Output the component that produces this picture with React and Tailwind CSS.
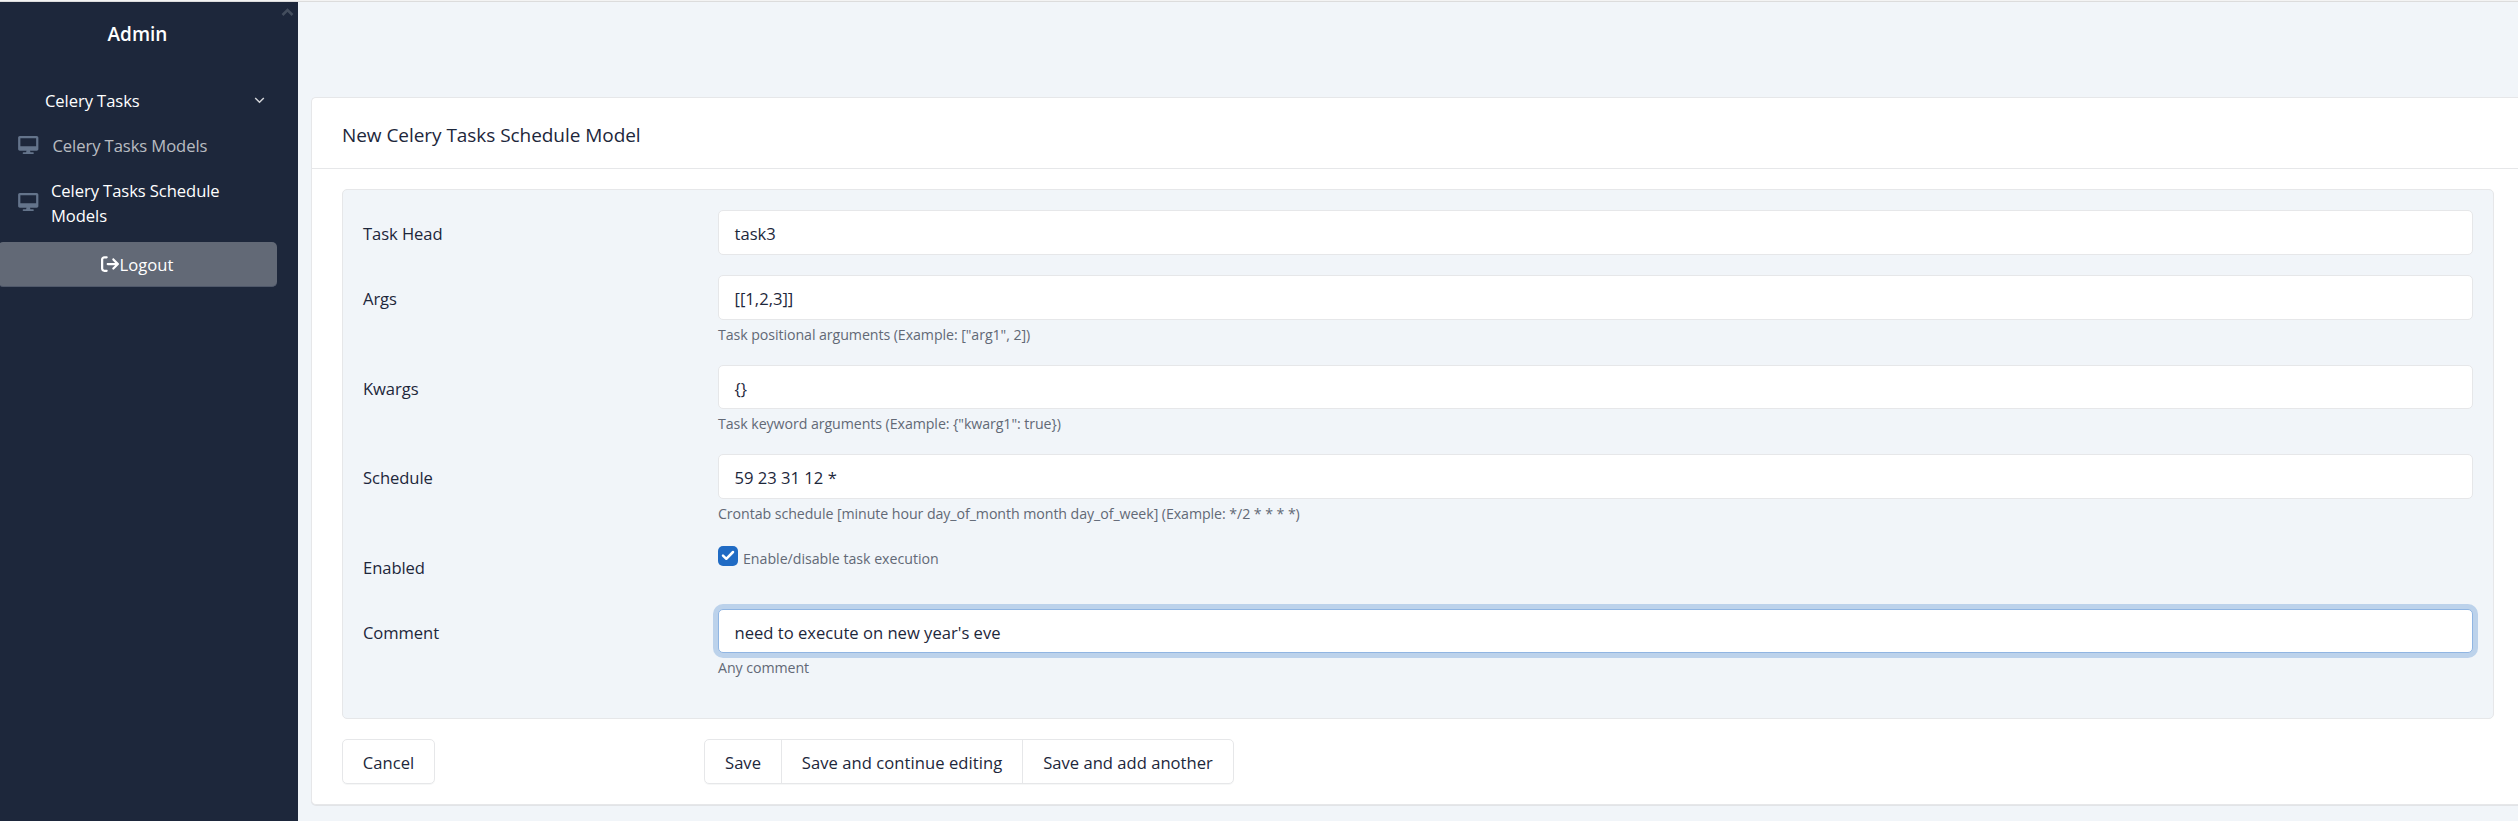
import { FaArrowRightFromBracket } from 'react-icons/fa6';

const fields = [
  { label: 'Task Head', value: 'task3' },
  { label: 'Args', value: '[[1,2,3]]', hint: 'Task positional arguments (Example: ["arg1", 2])' },
  { label: 'Kwargs', value: '{}', hint: 'Task keyword arguments (Example: {"kwarg1": true})' },
  {
    label: 'Schedule',
    value: '59 23 31 12 *',
    hint: 'Crontab schedule [minute hour day_of_month month day_of_week] (Example: */2 * * * *)',
  },
  { label: 'Enabled', checkbox: true, hint: 'Enable/disable task execution' },
  { label: 'Comment', value: "need to execute on new year's eve", hint: 'Any comment', focused: true },
];

function DesktopIcon() {
  return (
    <svg className="h-[18px] w-[20.5px] shrink-0" viewBox="0 0 576 512" fill="#64748b">
      <path d="M528 0H48C21.5 0 0 21.5 0 48v320c0 26.5 21.5 48 48 48h192l-16 48h-72c-13.2 0-24 10.8-24 24s10.8 24 24 24h272c13.3 0 24-10.7 24-24s-10.7-24-24-24h-72l-16-48h192c26.5 0 48-21.5 48-48V48c0-26.5-21.5-48-48-48zm-16 288H64V64h448v224z" />
    </svg>
  );
}

function Sidebar() {
  return (
    <aside className="relative w-[298px] shrink-0 bg-[#1d273b] text-white">
      <svg className="absolute left-[281px] top-[5px] h-[10px] w-[13px]" viewBox="0 0 13 10" fill="none" stroke="#434d5d" strokeWidth="2.6">
        <path d="M1.5 8 6.5 3l5 5" />
      </svg>
      <h1 className="w-[275px] pt-[17px] text-center text-[19px] font-semibold leading-[30px]">Admin</h1>

      <nav className="pt-[38px] tracking-[-0.08px]">
        <div className="flex h-[25px] items-center justify-between pl-[45px] pr-[33px]">
          <span className="pt-px">Celery Tasks</span>
          <svg className="mt-[2px] h-[7px] w-[11px]" viewBox="0 0 11 7" fill="none" stroke="#d2d4d8" strokeWidth="1.5">
            <path d="M1.2 1 5.5 5.3 9.8 1" />
          </svg>
        </div>
        <a className="mt-5 flex h-[25px] items-center pl-[18px] text-white/70">
          <DesktopIcon />
          <span className="pl-[14px] pt-px">Celery Tasks Models</span>
        </a>
        <a className="mt-5 flex h-[50px] items-center pl-[18px]">
          <DesktopIcon />
          <span className="pl-[12.5px] pt-px">
            Celery Tasks Schedule
            <br />
            Models
          </span>
        </a>
      </nav>

      <button className="-ml-0.5 mt-[15px] flex h-[45px] w-[279px] items-center justify-center rounded-[5px] border-b border-[#4f586a] bg-[#626976]">
        <FaArrowRightFromBracket className="mb-px size-[18px]" />
        <span className="pt-px tracking-[0.08px]">Logout</span>
      </button>
    </aside>
  );
}

function Field({ field }) {
  return (
    <div className={`flex ${field.hint && !field.checkbox ? 'h-[89.5px]' : 'h-[65px]'}`}>
      <label className="w-[355px] shrink-0 pt-[11px] tracking-[-0.08px]">{field.label}</label>
      {field.checkbox ? (
        <div className="flex pt-[2px]">
          <span className="flex size-5 items-center justify-center rounded-[5px] bg-[#206bc4]">
            <svg className="h-[11px] w-[14px]" viewBox="0 0 14 11" fill="none" stroke="white" strokeWidth="2.5" strokeLinecap="round" strokeLinejoin="round">
              <path d="M2 5.6 5.3 8.8 12 2" />
            </svg>
          </span>
          <span className="pl-[5px] pt-[2px] text-[14.2px] leading-[22px] tracking-[-0.02px] text-[#626976]">{field.hint}</span>
        </div>
      ) : (
        <div className="flex-1">
          <div
            className={`h-[44.7px] rounded-[5px] border bg-white pl-[15.5px] pt-[10px] ${
              field.focused ? 'border-[#90b5e2] shadow-[0_0_0_5px_rgba(32,107,196,0.25)]' : 'border-[#e6e7e9]'
            }`}
          >
            {field.value}
          </div>
          {field.hint && (
            <p className="pt-[4px] text-[14.2px] leading-[22px] tracking-[-0.07px] text-[#626976]">{field.hint}</p>
          )}
        </div>
      )}
    </div>
  );
}

export default function App() {
  return (
    <div className="flex h-[821px] flex-col overflow-hidden bg-[#f1f5f9] font-['Open_Sans',sans-serif] text-[16.6px] leading-[25px] text-[#1d273b]">
      <div className="h-[2px] shrink-0 border-b border-[#dcdcdc] bg-[#f3f3f3]" />
      <div className="flex flex-1">
        <Sidebar />

        <main className="flex-1 pl-[13px] pt-[95px]">
          <div className="h-[708px] rounded-l-[5px] border border-r-0 border-[#e6e7e9] bg-white shadow-[0_1px_0_#e2e4e7]">
            <div className="h-[71px] border-b border-[#e6e7e9] pl-[30px] pt-[22px]">
              <h3 className="text-[19px] leading-[30px] tracking-[-0.05px]">New Celery Tasks Schedule Model</h3>
            </div>

            <div className="pl-[30px] pr-6 pt-5">
              <div className="h-[530px] rounded-[5px] border border-[#e6e7e9] bg-[#f1f5f9] p-5">
                {fields.map((field) => (
                  <Field key={field.label} field={field} />
                ))}
              </div>

              {/* form actions */}
              <div className="flex pt-5">
                <button className="h-[45px] w-[93px] rounded-[5px] border border-[#e6e7e9] pt-px shadow-[0_1px_0_rgba(29,39,59,0.04)]">
                  Cancel
                </button>
                <div className="ml-[269px] flex h-[45px] divide-x divide-[#e6e7e9] rounded-[5px] border border-[#e6e7e9] shadow-[0_1px_0_rgba(29,39,59,0.04)]">
                  <button className="w-[77px] pt-px">Save</button>
                  <button className="w-[241px] pt-px tracking-[0.05px]">Save and continue editing</button>
                  <button className="w-[210px] pt-px">Save and add another</button>
                </div>
              </div>
            </div>
          </div>
        </main>
      </div>
    </div>
  );
}
